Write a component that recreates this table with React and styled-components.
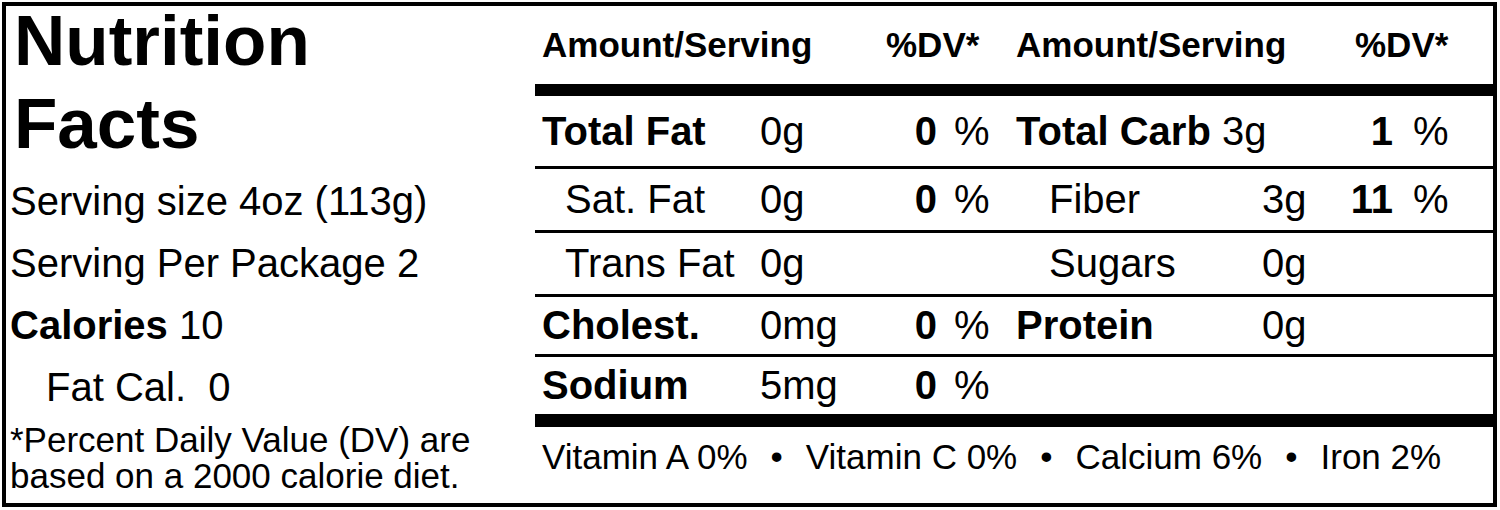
import React from 'react';
import styled, { createGlobalStyle } from 'styled-components';

const GlobalStyle = createGlobalStyle`
  html, body {
    margin: 0;
    padding: 0;
    background: #ffffff;
  }
  body {
    font-family: "Liberation Sans", Arial, Helvetica, sans-serif;
    color: #000000;
  }
`;

const Label = styled.div`
  box-sizing: border-box;
  width: 1495px;
  height: 505px;
  margin: 2px;
  border: 4px solid #000;
  background: #fff;
  display: grid;
  grid-template-columns: 529px 1fr;
`;

const LeftCol = styled.div`
  display: flex;
  flex-direction: column;
  padding-left: 4px;
`;

const Title = styled.h1`
  margin: -7px 0 5px 4px;
  font-size: 71px;
  line-height: 83px;
  font-weight: 700;
`;

const InfoLine = styled.div`
  height: 62px;
  display: flex;
  align-items: center;
  font-size: 40px;
  padding-left: ${(p) => p.indent || 0}px;
  white-space: pre;
  b {
    font-weight: 700;
  }
`;

const Footnote = styled.p`
  margin: 4px 0 0 0;
  font-size: 35px;
  line-height: 36px;
`;

const Panel = styled.div`
  display: flex;
  flex-direction: column;
`;

const Grid = styled.div`
  display: grid;
  grid-template-columns: 218px 120px 57px 79px 246px 58px 73px 1fr;
  align-items: center;
  padding-left: 7px;
  height: ${(p) => p.h}px;
`;

const HeadCell = styled.div`
  grid-column: ${(p) => p.span};
  font-size: 35px;
  font-weight: 700;
  padding-left: ${(p) => p.offset || 0}px;
`;

const Rule = styled.div`
  height: ${(p) => p.size}px;
  background: #000;
`;

const Name = styled.div`
  grid-column: span ${(p) => p.span || 1};
  font-size: 40px;
  font-weight: ${(p) => (p.bold ? 700 : 400)};
  padding-left: ${(p) => p.indent || 0}px;
  white-space: nowrap;
  span {
    font-weight: 400;
  }
`;

const Amount = styled.div`
  font-size: 40px;
`;

const Num = styled.div`
  font-size: 40px;
  font-weight: 700;
  text-align: right;
`;

const Pct = styled.div`
  font-size: 40px;
  padding-left: ${(p) => p.pad}px;
`;

const Vitamins = styled.div`
  height: 76px;
  display: flex;
  align-items: flex-start;
  padding: 10px 0 0 7px;
  box-sizing: border-box;
  font-size: 35px;
  gap: 23px;
`;

const Dot = styled.span`
  font-size: 35px;
`;

const rows = [
  {
    h: 70,
    left: { name: 'Total Fat', bold: true, amt: '0g', dv: '0' },
    right: { name: 'Total Carb', bold: true, amt: '3g', dv: '1', inline: true },
  },
  {
    h: 61,
    left: { name: 'Sat. Fat', indent: 23, amt: '0g', dv: '0' },
    right: { name: 'Fiber', indent: 33, amt: '3g', dv: '11' },
  },
  {
    h: 61,
    left: { name: 'Trans Fat', indent: 23, amt: '0g' },
    right: { name: 'Sugars', indent: 33, amt: '0g' },
  },
  {
    h: 57,
    left: { name: 'Cholest.', bold: true, amt: '0mg', dv: '0' },
    right: { name: 'Protein', bold: true, amt: '0g' },
  },
  {
    h: 57,
    left: { name: 'Sodium', bold: true, amt: '5mg', dv: '0' },
    right: null,
  },
];

const Half = ({ item, pad }) => {
  if (!item) return <><div /><div /><div /><div /></>;
  return (
    <>
      {item.inline ? (
        <Name span={2} bold={item.bold} indent={item.indent}>
          {item.name} <span>{item.amt}</span>
        </Name>
      ) : (
        <>
          <Name bold={item.bold} indent={item.indent}>{item.name}</Name>
          <Amount>{item.amt}</Amount>
        </>
      )}
      <Num>{item.dv || ''}</Num>
      <Pct pad={pad}>{item.dv ? '%' : ''}</Pct>
    </>
  );
};

const vitamins = ['Vitamin A 0%', 'Vitamin C 0%', 'Calcium 6%', 'Iron 2%'];

export default function App() {
  return (
    <>
      <GlobalStyle />
      <Label>
        <LeftCol>
          <Title>
            Nutrition
            <br />
            Facts
          </Title>
          <InfoLine>Serving size 4oz (113g)</InfoLine>
          <InfoLine>Serving Per Package 2</InfoLine>
          <InfoLine>
            <b>Calories</b> 10
          </InfoLine>
          <InfoLine indent={36}>Fat Cal.  0</InfoLine>
          <Footnote>
            *Percent Daily Value (DV) are
            <br />
            based on a 2000 calorie diet.
          </Footnote>
        </LeftCol>

        <Panel>
          <Grid h={78}>
            <HeadCell span="1 / 3">Amount/Serving</HeadCell>
            <HeadCell span="3 / 5" offset={6}>%DV*</HeadCell>
            <HeadCell span="5 / 7">Amount/Serving</HeadCell>
            <HeadCell span="7 / 9" offset={35}>%DV*</HeadCell>
          </Grid>
          <Rule size={12} />
          {rows.map((row, i) => (
            <React.Fragment key={i}>
              <Grid h={row.h}>
                <Half item={row.left} pad={17} />
                <Half item={row.right} pad={20} />
              </Grid>
              {i < rows.length - 1 && <Rule size={3} />}
            </React.Fragment>
          ))}
          <Rule size={13} />
          <Vitamins>
            {vitamins.map((v, i) => (
              <React.Fragment key={v}>
                {i > 0 && <Dot>•</Dot>}
                <span>{v}</span>
              </React.Fragment>
            ))}
          </Vitamins>
        </Panel>
      </Label>
    </>
  );
}
